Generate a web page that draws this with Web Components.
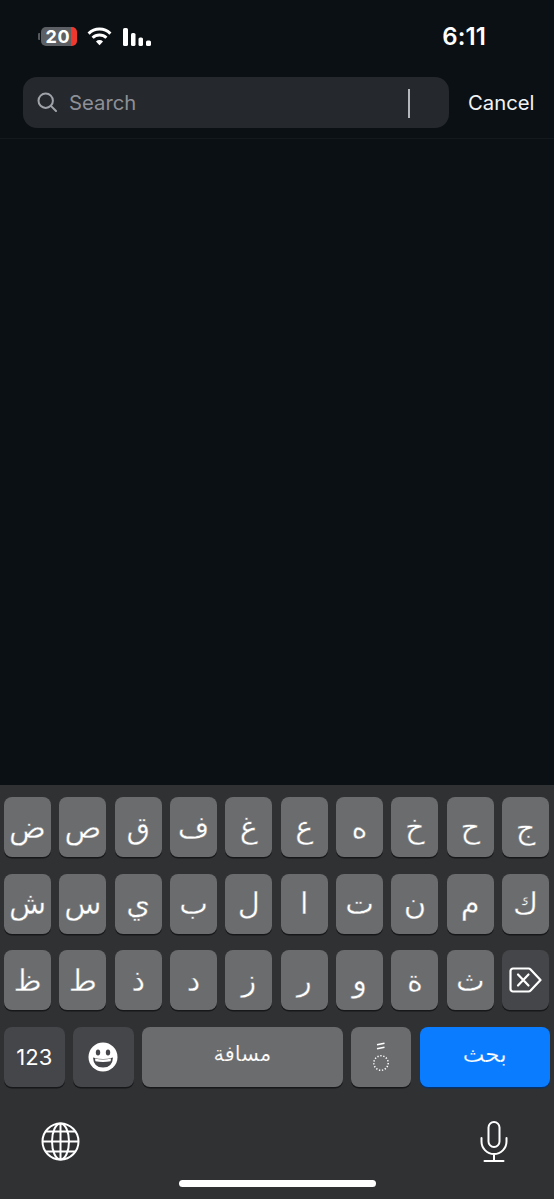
<!DOCTYPE html>
<html><head><meta charset="utf-8"><style>
html,body{margin:0;padding:0;background:#0b1014;}
body{width:554px;height:1199px;overflow:hidden;font-family:Inter,"Liberation Sans",sans-serif;}
app-screen{display:flex;}
</style></head><body>
<app-screen></app-screen>
<script>
const def=(n,css,html)=>customElements.define(n,class extends HTMLElement{constructor(){super();this.attachShadow({mode:'open'}).innerHTML=`<style>${css}</style>${html}`;}});

def('status-bar',`
:host{display:flex;align-items:flex-start;height:77px;box-sizing:border-box;padding:24px 68px 0 38px;justify-content:space-between;color:#fff}
.l{display:flex;align-items:flex-start}
.bat{position:relative;width:36px;height:19px;margin-top:3px;margin-left:3px;border-radius:5px;background:linear-gradient(90deg,#5c5f63 0 30px,#f0392e 30px);font:700 18px/19px Inter,sans-serif;letter-spacing:.8px;text-align:center;padding-right:2px;box-sizing:border-box}
.nub{width:2px;height:7px;margin-top:9px;background:#55585c;border-radius:1px 0 0 1px;margin-right:-2px}
.wifi{margin:3px 0 0 10px}.sig{margin:4px 0 0 11px}
.t{font:600 24px/28px Inter,sans-serif;letter-spacing:.1px;margin-top:-1px}
`,`<div class="l"><span class="nub"></span><span class="bat">20</span>
<svg class="wifi" width="25" height="19" viewBox="0 0 25 19"><g fill="none" stroke="#fff" stroke-width="3"><path d="M1.600 6.600a15.500 15.500 0 0 1 21.800 0"/><path d="M5.600 10.800a9.700 9.700 0 0 1 13.800 0"/></g><path d="M9 14.400a5 5 0 0 1 7 0l-3.500 3.900z" fill="#fff"/></svg>
<svg class="sig" width="28" height="18" viewBox="0 0 28 18" fill="#fff"><rect x="0" y="0" width="5" height="18" rx="1.600"/><rect x="8" y="5" width="4.500" height="13" rx="1.600"/><rect x="15.500" y="9.500" width="4.500" height="8.500" rx="1.600"/><rect x="23" y="12.500" width="5" height="5.500" rx="1.600"/></svg>
</div><div class="t">6:11</div>`);

def('search-bar',`
:host{display:flex;align-items:center;height:62px;box-sizing:border-box;padding:0 20px 11px 23px;gap:19px;border-bottom:1px solid #14191d}
.box{position:relative;flex:none;width:426px;height:51px;border-radius:14px;background:#25282d;display:flex;align-items:center;padding-left:14px;box-sizing:border-box;gap:12px}
.ph{font:400 20.300px/26px Inter,sans-serif;color:#8d9097;margin-top:2px}
.caret{position:absolute;left:385px;top:12px;width:2px;height:29px;background:#b5b7bb}
.c{font:400 20.300px/26px Inter,sans-serif;color:#f2f3f4;margin-top:2px}
`,`<div class="box"><svg width="20" height="20" viewBox="0 0 20 20" fill="none" stroke="#a0a3a9" stroke-width="2"><circle cx="8.700" cy="8.700" r="7.200"/><path d="M13.900 13.900L19 19" stroke-linecap="round"/></svg><span class="ph">Search</span><span class="caret"></span></div><span class="c">Cancel</span>`);

def('results-area',`:host{display:block;height:646px;background:#0b1014}`,``);

def('kb-key',`
:host{display:flex;align-items:center;justify-content:center;box-sizing:border-box;height:60px;border-radius:8px;background:var(--bg,#6b6c6e);box-shadow:0 1.500px 0 #17181a;color:#fff;font:400 var(--fs,30.500px)/1 "DejaVu Sans",sans-serif;overflow:hidden;padding-top:var(--pt,2px);-webkit-text-stroke:var(--thin,.35px) var(--bg,#6b6c6e)}
:host([dark]){--bg:#454649;--pt:0px;--thin:0px}
:host([blue]){--bg:#0a7cff;box-shadow:0 1.500px 0 #07326b}
`,`<slot></slot>`);

def('kb-row',`:host{display:grid;grid-template-columns:repeat(10,47.05px);column-gap:8.300px;padding:0 4px}`,`<slot></slot>`);
def('kb-bottom-row',`:host{display:grid;grid-template-columns:60.500px 61px 200.500px 60.500px 130px;column-gap:8.300px;padding:0 4px}`,`<slot></slot>`);

def('soft-keyboard',`
:host{display:flex;flex-direction:column;flex:1;height:414px;box-sizing:border-box;background:#2f3133;padding-top:12px;position:relative}
.rows{display:flex;flex-direction:column;gap:16.600px}
.tools{display:flex;justify-content:space-between;padding:35px 46px 0 41px;align-items:flex-start}
.home{position:absolute;left:179px;bottom:12px;width:197px;height:7px;border-radius:4px;background:#fff}
`,`<div class="rows"><slot></slot></div>
<div class="tools">
<svg width="39" height="39" viewBox="0 0 39 39" fill="none" stroke="#fff" stroke-width="2"><circle cx="19.500" cy="19.500" r="18"/><ellipse cx="19.500" cy="19.500" rx="8.500" ry="18"/><path d="M19.500 1.500v36M1.500 19.500h36M4.600 9.600h29.800M4.600 29.400h29.800"/></svg>
<svg style="margin-top:-1px" width="28" height="41" viewBox="0 0 28 41" fill="none" stroke="#fff" stroke-width="2"><rect x="8.500" y="1" width="11" height="25" rx="5.500"/><path d="M1.500 17v3.500a12.500 12.500 0 0 0 25 0V17M14 33v7M4.500 40h19" stroke-linecap="round"/></svg>
</div><div class="home"></div>`);

def('app-screen',`:host{display:flex;flex-direction:column;width:554px;height:1199px;background:#0b1014}`,`
<status-bar></status-bar><search-bar></search-bar><results-area></results-area>
<soft-keyboard>
<kb-row>${['ض','ص','ق','ف','غ','ع','ه','خ','ح','ج'].map(k=>`<kb-key>${k}</kb-key>`).join('')}</kb-row>
<kb-row>${['ش','س','ي','ب','ل','ا','ت','ن','م','ك'].map(k=>`<kb-key>${k}</kb-key>`).join('')}</kb-row>
<kb-row>${['ظ','ط','ذ','د','ز','ر','و','ة','ث'].map(k=>`<kb-key>${k}</kb-key>`).join('')}<kb-key dark><svg width="33" height="26" viewBox="0 0 33 26" fill="none" stroke="#fff" stroke-width="2.200" stroke-linejoin="round" stroke-linecap="round"><path d="M4 1.500h15.500a3 3 0 0 1 2.100.900L31.500 13l-9.900 10.600a3 3 0 0 1-2.100.900H4A2.500 2.500 0 0 1 1.500 22V4A2.500 2.500 0 0 1 4 1.500z"/><path d="M9 7.500l10.500 11M19.500 7.500L9 18.500"/></svg></kb-key></kb-row>
<kb-bottom-row>
<kb-key dark style="--fs:22px;font-family:Inter,sans-serif">123</kb-key>
<kb-key dark><svg width="30" height="30" viewBox="0 0 30 30"><circle cx="15" cy="15" r="14.500" fill="#fff"/><ellipse cx="10" cy="10.500" rx="2.200" ry="3" fill="#454649"/><ellipse cx="20" cy="10.500" rx="2.200" ry="3" fill="#454649"/><path d="M5 15.500q10 3 20 0q-.5 10-10 10t-10-10z" fill="#454649"/><path d="M7 16.600q8 2 16 0l-.4 2.600q-7.600 1.400-15.200 0z" fill="#fff"/></svg></kb-key>
<kb-key style="--fs:21px;--pt:0px;--thin:.2px;padding-bottom:4px">مسافة</kb-key>
<kb-key><svg width="20" height="32" viewBox="0 0 20 32" fill="none"><path d="M6 2.800l7.500-1.500M6 6.800l7.500-1.500" stroke="#fff" stroke-width="1.600"/><circle cx="10" cy="21" r="7.200" stroke="#fff" stroke-width="1.500" stroke-dasharray="1.300 1.700"/></svg></kb-key>
<kb-key blue style="--fs:23px;--pt:0px;--thin:.2px;padding-bottom:4px">بحث</kb-key>
</kb-bottom-row>
</soft-keyboard>`);
</script></body></html>
